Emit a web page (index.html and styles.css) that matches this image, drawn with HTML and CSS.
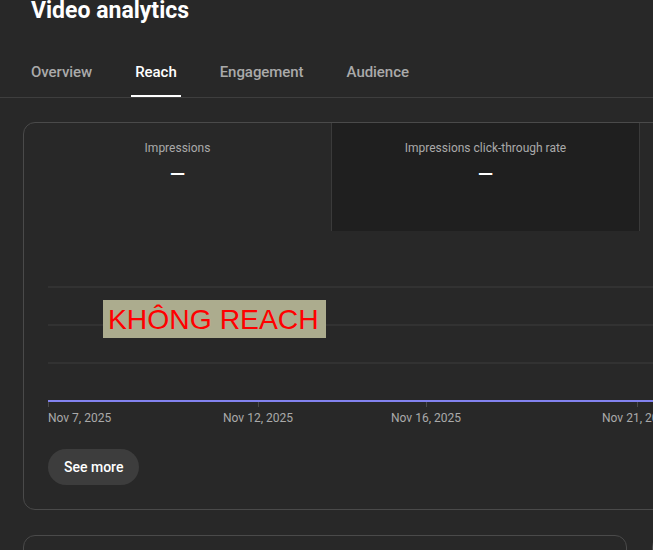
FILE: index.html
```html
<!DOCTYPE html>
<html lang="en">
<head>
<meta charset="utf-8">
<title>Video analytics</title>
<link rel="stylesheet" href="styles.css">
</head>
<body>
<div class="page">
  <h1 class="title">Video analytics</h1>
  <nav class="tabs">
    <div class="tab">Overview</div>
    <div class="tab active">Reach</div>
    <div class="tab">Engagement</div>
    <div class="tab">Audience</div>
  </nav>

  <section class="card">
    <div class="metrics">
      <div class="metric">
        <div class="metric-label">Impressions</div>
        <div class="metric-value">—</div>
      </div>
      <div class="metric selected">
        <div class="metric-label">Impressions click-through rate</div>
        <div class="metric-value">—</div>
      </div>
      <div class="metric">
        <div class="metric-label">Unique viewers</div>
        <div class="metric-value">—</div>
      </div>
    </div>

    <div class="chart">
      <div class="grid-line"></div>
      <div class="grid-line"></div>
      <div class="grid-line"></div>
      <div class="baseline"></div>
      <div class="axis">
        <span class="tick" style="left:0px"></span>
        <span class="tick" style="left:210px"></span>
        <span class="tick" style="left:378px"></span>
        <span class="tick" style="left:589px"></span>
        <span class="axis-label first" style="left:0px">Nov 7, 2025</span>
        <span class="axis-label" style="left:210px">Nov 12, 2025</span>
        <span class="axis-label" style="left:378px">Nov 16, 2025</span>
        <span class="axis-label" style="left:589px">Nov 21, 2025</span>
      </div>
      <button class="see-more">See more</button>
    </div>

    <div class="overlay">KHÔNG REACH</div>
  </section>

  <div class="row">
    <section class="card small"></section>
    <section class="card small"></section>
  </div>
</div>
</body>
</html>
```

FILE: styles.css
```css
html, body {
  margin: 0;
  padding: 0;
  overflow: hidden;
  background: #282828;
  height: 100%;
}

body {
  font-family: Roboto, "Liberation Sans", Arial, sans-serif;
  color: #ffffff;
}

.page {
  width: 1400px;
}

.title {
  margin: -3px 0 0 31px;
  font-family: Roboto, "Liberation Sans", sans-serif;
  font-size: 23px;
  font-weight: 700;
  line-height: 28px;
  color: #ffffff;
}

.tabs {
  display: flex;
  gap: 35px;
  margin-top: 24px;
  padding-left: 27px;
  border-bottom: 1px solid #3e3e3e;
  width: 626px;
}

.tab {
  height: 46px;
  padding: 0 4px;
  display: flex;
  align-items: center;
  font-size: 15px;
  font-weight: 500;
  line-height: 20px;
  letter-spacing: -0.05px;
  color: #aaaaaa;
  border-bottom: 2px solid transparent;
}

.tab.active {
  color: #ffffff;
  border-bottom-color: #ffffff;
}

.card {
  position: relative;
  margin: 24px 0 0 23px;
  width: 1000px;
  border: 1px solid #4a4a4a;
  border-radius: 12px;
  overflow: hidden;
  box-sizing: border-box;
}

.metrics {
  display: flex;
}

.metric {
  width: 307px;
  height: 108px;
  border-right: 1px solid #3a3a3a;
  box-sizing: content-box;
  display: flex;
  flex-direction: column;
  align-items: center;
}

.metric.selected {
  background: #1f1f1f;
}

.metric-label {
  margin-top: 17px;
  font-size: 12px;
  line-height: 16px;
  color: #aaaaaa;
}

.metric-value {
  margin-top: 6px;
  font-size: 20px;
  line-height: 24px;
  font-weight: 500;
  color: #ffffff;
}

.chart {
  padding: 0 0 24px 24px;
  margin-top: 55px;
}

.grid-line {
  height: 2px;
  background: #323232;
  margin-bottom: 36px;
}

.baseline {
  height: 2px;
  background: #8282ee;
}

.axis {
  position: relative;
  height: 28px;
}

.tick {
  position: absolute;
  top: 0;
  width: 1px;
  height: 5px;
  background: #4a4a4a;
}

.axis-label {
  position: absolute;
  top: 8px;
  font-size: 12px;
  line-height: 16px;
  color: #aaaaaa;
  white-space: nowrap;
  transform: translateX(-50%);
}

.axis-label.first {
  transform: none;
}

.see-more {
  display: block;
  margin-top: 19px;
  height: 36px;
  padding: 0 16px;
  border: none;
  border-radius: 18px;
  background: #3d3d3d;
  color: #ffffff;
  font-family: Roboto, "Liberation Sans", sans-serif;
  font-size: 14px;
  font-weight: 500;
}

.overlay {
  position: absolute;
  top: 177px;
  left: 79px;
  padding: 3px 7px 3px 5px;
  background: #acac8e;
  color: #ff0000;
  font-family: "Liberation Sans", Arial, sans-serif;
  font-size: 28.3px;
  line-height: 32px;
}

.row {
  display: flex;
  gap: 25px;
  margin: 25px 0 0 23px;
}

.row .card {
  margin: 0;
  width: 604px;
  height: 300px;
  flex: none;
}
```
